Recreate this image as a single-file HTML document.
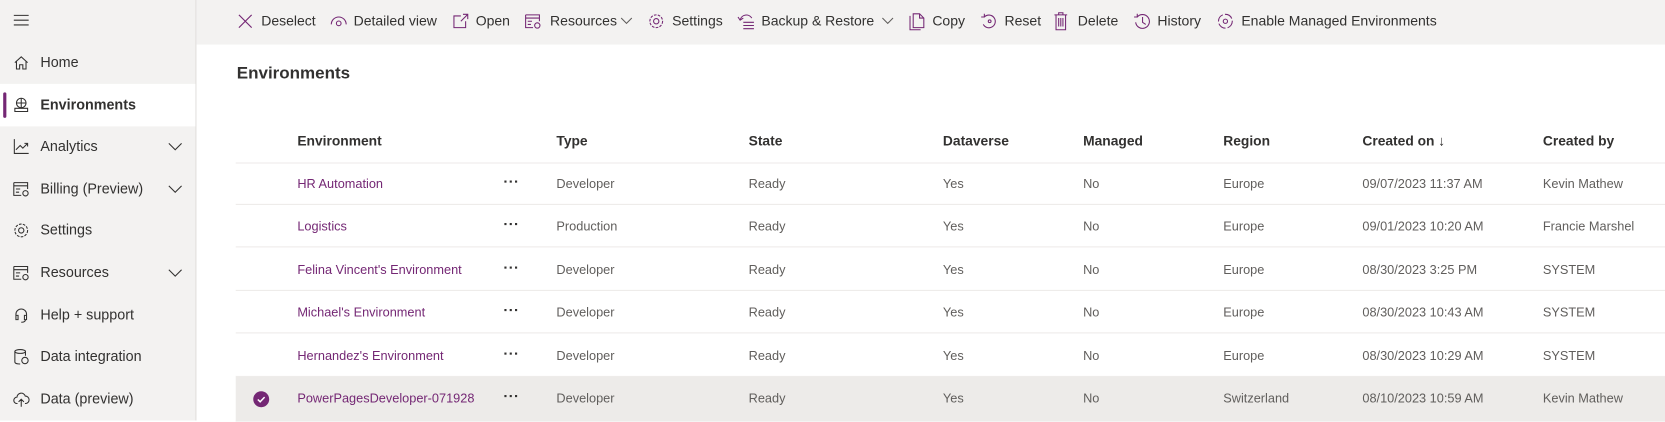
<!DOCTYPE html>
<html><head><meta charset="utf-8"><style>
*{margin:0;padding:0;box-sizing:border-box}
body{width:1665px;height:420px;overflow:hidden;background:#fff;font-family:"Liberation Sans",sans-serif;color:#323130;position:relative}
#wrap{position:absolute;left:0;top:0;width:1568px;height:396px;transform:scale(1.06186);transform-origin:0 0}
.abs{position:absolute;white-space:nowrap}
#side{position:absolute;left:0;top:0;width:185px;height:396px;background:#f3f2f1;border-right:1px solid #e1dfdd}
#tb{position:absolute;left:185px;top:0;right:0;height:42px;background:#f3f2f1}
.nav{position:absolute;left:0;width:184px;height:40px;font-size:13.5px}
.nav span{position:absolute;left:38px;top:12px}
.nav svg{position:absolute;left:12px;top:12px}
.nav .chev{position:absolute;left:158px;top:13px}
.tbi{position:absolute;top:12px;font-size:13.2px;color:#323130}
.h{position:absolute;top:125px;font-size:13px;font-weight:bold;color:#323130}
.row{position:absolute;left:222px;right:0;height:40px;border-bottom:1px solid #edebe9;font-size:12px;color:#605e5c}
.row div{position:absolute;top:13px;white-space:nowrap}
.row .n{color:#742774}
.row .d{top:17px;left:253px}
.row .d i{display:inline-block;width:2px;height:2px;background:#323130;margin-right:3px;vertical-align:top}
</style></head><body><div id="wrap">
<div id="side">
<svg class="abs" style="left:12px;top:13px" width="16" height="12"><path d="M1 1.5h14M1 6h14M1 10.5h14" stroke="#323130" stroke-width="1"/></svg>
<div class="nav" style="top:39px"><svg width="16" height="16" viewBox="0 0 16 16"><path d="M2 8L8 2.5 14 8M3.5 6.8V14h3v-4h3v4h3V6.8" fill="none" stroke="#323130"/></svg><span>Home</span></div>
<div class="nav" style="top:79px;background:#fff"><div class="abs" style="left:3px;top:8px;width:3px;height:24px;background:#742774;border-radius:2px"></div><svg width="16" height="16" viewBox="0 0 16 16"><circle cx="8" cy="6" r="4.5" fill="none" stroke="#323130"/><path d="M3.5 6h9M8 1.5v9M2 11h12v3H2z" fill="none" stroke="#323130"/></svg><span style="font-weight:bold">Environments</span></div>
<div class="nav" style="top:118px"><svg width="16" height="16" viewBox="0 0 16 16"><path d="M1.5 1v13.5H15M3 11l4-4 2.5 2.5L14 5M11 5h3v3" fill="none" stroke="#323130"/></svg><span>Analytics</span><svg class="chev" width="14" height="14"><path d="M1 4l6 6 6-6" fill="none" stroke="#323130"/></svg></div>
<div class="nav" style="top:158px"><svg width="16" height="16" viewBox="0 0 16 16"><path d="M1 2h13v6M1 2v12h7M1 5h13M3 8h4M3 11h3" fill="none" stroke="#323130"/><circle cx="12" cy="12" r="2.5" fill="none" stroke="#323130"/></svg><span>Billing (Preview)</span><svg class="chev" width="14" height="14"><path d="M1 4l6 6 6-6" fill="none" stroke="#323130"/></svg></div>
<div class="nav" style="top:197px"><svg width="16" height="16" viewBox="0 0 16 16"><circle cx="8" cy="8" r="2.5" fill="none" stroke="#323130"/><circle cx="8" cy="8" r="6" fill="none" stroke="#323130" stroke-dasharray="2.5 1.2"/></svg><span>Settings</span></div>
<div class="nav" style="top:237px"><svg width="16" height="16" viewBox="0 0 16 16"><path d="M1 2h13v6M1 2v12h7M1 5h13M3 8h4M3 11h3" fill="none" stroke="#323130"/><circle cx="12" cy="12" r="2.5" fill="none" stroke="#323130"/></svg><span>Resources</span><svg class="chev" width="14" height="14"><path d="M1 4l6 6 6-6" fill="none" stroke="#323130"/></svg></div>
<div class="nav" style="top:277px"><svg width="16" height="16" viewBox="0 0 16 16"><path d="M3 9V7a5 5 0 0110 0v2M3 8h2v4H3zM11 8h2v4h-2zM12 12c0 2-2 2.5-4 2.5" fill="none" stroke="#323130"/></svg><span>Help + support</span></div>
<div class="nav" style="top:316px"><svg width="16" height="16" viewBox="0 0 16 16"><ellipse cx="7" cy="3" rx="5" ry="1.8" fill="none" stroke="#323130"/><path d="M2 3v10c0 1 2 1.8 5 1.8M12 3v4" fill="none" stroke="#323130"/><circle cx="11.5" cy="11.5" r="3" fill="none" stroke="#323130"/></svg><span>Data integration</span></div>
<div class="nav" style="top:356px"><svg width="16" height="16" viewBox="0 0 16 16"><path d="M4.5 12H4a3 3 0 010-6 4 4 0 017.8-1A3.5 3.5 0 0112 12h-.5M8 15V8M5.5 10.5L8 8l2.5 2.5" fill="none" stroke="#323130"/></svg><span>Data (preview)</span></div>
</div>

<div id="tb"></div>
<svg class="abs" style="left:224px;top:13px" width="14" height="14"><path d="M1 1l12 12M13 1L1 13" stroke="#742774" stroke-width="1.1"/></svg><div class="tbi" style="left:246px">Deselect</div>
<svg class="abs" style="left:311px;top:13px" width="16" height="14"><path d="M1 10a7 7 0 0114 0" fill="none" stroke="#742774"/><circle cx="8" cy="9" r="2.2" fill="none" stroke="#742774"/></svg><div class="tbi" style="left:333px">Detailed view</div>
<svg class="abs" style="left:426px;top:12px" width="16" height="16"><path d="M8 3H1.5v11h11V8M10 1.5h4.5V6M14.5 1.5L8 8" fill="none" stroke="#742774"/></svg><div class="tbi" style="left:448px">Open</div>
<svg class="abs" style="left:494px;top:12px" width="16" height="16" viewBox="0 0 16 16"><path d="M1 2h13v6M1 2v12h7M1 5h13M3 8h4M3 11h3" fill="none" stroke="#742774"/><circle cx="12" cy="12" r="2.5" fill="none" stroke="#742774"/></svg><div class="tbi" style="left:518px">Resources</div>
<svg class="abs" style="left:584px;top:16px" width="12" height="8"><path d="M1 1l5 5 5-5" fill="none" stroke="#605e5c"/></svg>
<svg class="abs" style="left:610px;top:12px" width="16" height="16"><circle cx="8" cy="8" r="2.5" fill="none" stroke="#742774"/><circle cx="8" cy="8" r="6" fill="none" stroke="#742774" stroke-dasharray="2.5 1.2"/></svg><div class="tbi" style="left:633px">Settings</div>
<svg class="abs" style="left:694px;top:12px" width="17" height="16"><path d="M3 7a6 6 0 0111-2M1 4l2 3 3-2M6 9h10M6 12h10M6 15h10" fill="none" stroke="#742774"/></svg><div class="tbi" style="left:717px">Backup &amp; Restore</div>
<svg class="abs" style="left:830px;top:16px" width="12" height="8"><path d="M1 1l5 5 5-5" fill="none" stroke="#605e5c"/></svg>
<svg class="abs" style="left:856px;top:12px" width="15" height="17"><path d="M1 3v13h10M4 1h6l4 4v9H4zM10 1v4h4" fill="none" stroke="#742774"/></svg><div class="tbi" style="left:878px">Copy</div>
<svg class="abs" style="left:923px;top:12px" width="16" height="16"><path d="M4 4a6 6 0 11-1 7M1 4h3V1" fill="none" stroke="#742774"/><circle cx="9" cy="8" r="1.3" fill="none" stroke="#742774"/></svg><div class="tbi" style="left:946px">Reset</div>
<svg class="abs" style="left:992px;top:11px" width="14" height="18"><path d="M1 3h12M5 3V1h4v2M2.5 3v14h9V3M5 6v8M7 6v8M9 6v8" fill="none" stroke="#742774"/></svg><div class="tbi" style="left:1015px">Delete</div>
<svg class="abs" style="left:1067px;top:12px" width="17" height="16"><path d="M4 4a6.5 6.5 0 11-1.5 5M1 4h3V1M9 4v5l3 2" fill="none" stroke="#742774"/></svg><div class="tbi" style="left:1090px">History</div>
<svg class="abs" style="left:1146px;top:12px" width="16" height="16"><circle cx="8" cy="8" r="6.5" fill="none" stroke="#742774" stroke-dasharray="8 2"/><circle cx="8" cy="8" r="2" fill="none" stroke="#742774"/></svg><div class="tbi" style="left:1169px">Enable Managed Environments</div>

<div class="abs" style="left:223px;top:61px;font-size:16px;font-weight:bold;color:#323130">Environments</div>

<div class="h" style="left:280px">Environment</div>
<div class="h" style="left:524px">Type</div>
<div class="h" style="left:705px">State</div>
<div class="h" style="left:888px">Dataverse</div>
<div class="h" style="left:1020px">Managed</div>
<div class="h" style="left:1152px">Region</div>
<div class="h" style="left:1283px">Created on ↓</div>
<div class="h" style="left:1453px">Created by</div>
<div class="abs" style="left:222px;right:0;top:153px;border-top:1px solid #edebe9"></div>

<div class="row" style="top:153px"><div class="n" style="left:58px">HR Automation</div><div class="d"><i></i><i></i><i></i></div><div style="left:302px">Developer</div><div style="left:483px">Ready</div><div style="left:666px">Yes</div><div style="left:798px">No</div><div style="left:930px">Europe</div><div style="left:1061px">09/07/2023 11:37 AM</div><div style="left:1231px">Kevin Mathew</div></div>
<div class="row" style="top:193px"><div class="n" style="left:58px">Logistics</div><div class="d"><i></i><i></i><i></i></div><div style="left:302px">Production</div><div style="left:483px">Ready</div><div style="left:666px">Yes</div><div style="left:798px">No</div><div style="left:930px">Europe</div><div style="left:1061px">09/01/2023 10:20 AM</div><div style="left:1231px">Francie Marshel</div></div>
<div class="row" style="top:234px"><div class="n" style="left:58px">Felina Vincent's Environment</div><div class="d"><i></i><i></i><i></i></div><div style="left:302px">Developer</div><div style="left:483px">Ready</div><div style="left:666px">Yes</div><div style="left:798px">No</div><div style="left:930px">Europe</div><div style="left:1061px">08/30/2023 3:25 PM</div><div style="left:1231px">SYSTEM</div></div>
<div class="row" style="top:274px"><div class="n" style="left:58px">Michael's Environment</div><div class="d"><i></i><i></i><i></i></div><div style="left:302px">Developer</div><div style="left:483px">Ready</div><div style="left:666px">Yes</div><div style="left:798px">No</div><div style="left:930px">Europe</div><div style="left:1061px">08/30/2023 10:43 AM</div><div style="left:1231px">SYSTEM</div></div>
<div class="row" style="top:315px"><div class="n" style="left:58px">Hernandez's Environment</div><div class="d"><i></i><i></i><i></i></div><div style="left:302px">Developer</div><div style="left:483px">Ready</div><div style="left:666px">Yes</div><div style="left:798px">No</div><div style="left:930px">Europe</div><div style="left:1061px">08/30/2023 10:29 AM</div><div style="left:1231px">SYSTEM</div></div>
<div class="row" style="top:355px;background:#edebe9;height:42px"><svg style="position:absolute;left:16px;top:13px" width="16" height="16"><circle cx="8" cy="8" r="7.5" fill="#742774"/><path d="M4.8 8.2l2.2 2.2 4.2-4.4" fill="none" stroke="#fff" stroke-width="1.4"/></svg><div class="n" style="left:58px">PowerPagesDeveloper-071928</div><div class="d"><i></i><i></i><i></i></div><div style="left:302px">Developer</div><div style="left:483px">Ready</div><div style="left:666px">Yes</div><div style="left:798px">No</div><div style="left:930px">Switzerland</div><div style="left:1061px">08/10/2023 10:59 AM</div><div style="left:1231px">Kevin Mathew</div></div>
</div></body></html>
